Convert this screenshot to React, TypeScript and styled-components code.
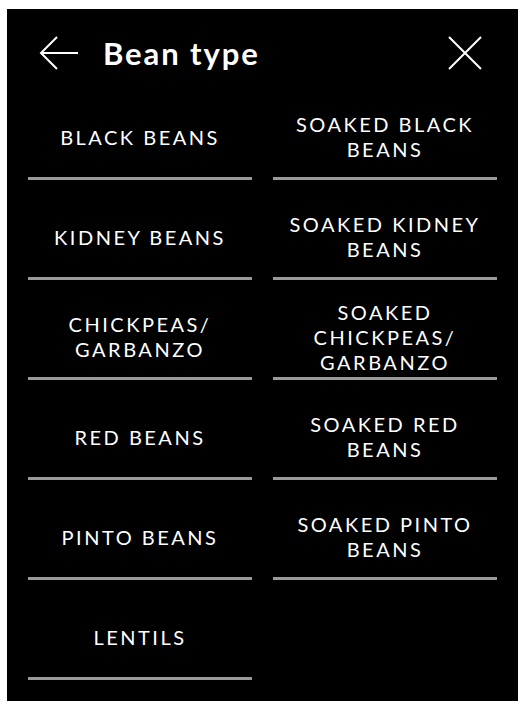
import React from "react";
import styled, { createGlobalStyle } from "styled-components";

const GlobalStyle = createGlobalStyle`
  body {
    margin: 0;
    background: #fff;
    font-family: "Lato", "Noto Sans", sans-serif;
  }
`;

const Page = styled.div`
  padding: 9px 8px 9px 7px;
`;

const Panel = styled.div`
  width: 511px;
  background: #000;
  color: #fff;
  padding-bottom: 21px;
  box-sizing: border-box;
`;

const Header = styled.div`
  height: 88px;
  display: flex;
  align-items: center;
  padding: 0 36px 0 32px;
`;

const IconButton = styled.button`
  background: none;
  border: none;
  padding: 0;
  display: flex;
  align-items: center;
  justify-content: center;
  color: #fff;
  cursor: pointer;
`;

const Title = styled.h1`
  margin: 0 0 0 24px;
  flex: 1;
  font-size: 31px;
  font-weight: 700;
  letter-spacing: 1.9px;
`;

const Grid = styled.div`
  display: grid;
  grid-template-columns: 224px 224px;
  column-gap: 21px;
  row-gap: 17px;
  padding: 0 21px;
`;

const Option = styled.button`
  height: 83px;
  box-sizing: border-box;
  background: none;
  border: none;
  border-bottom: 3px solid #9a9a9a;
  color: #fff;
  font-family: "Lato", "Noto Sans", sans-serif;
  font-size: 20px;
  font-weight: 400;
  letter-spacing: 2.5px;
  line-height: 25px;
  text-transform: uppercase;
  text-align: center;
  padding: 0 8px;
  display: flex;
  align-items: center;
  justify-content: center;
  cursor: pointer;
`;

const options = [
  "Black beans",
  "Soaked black beans",
  "Kidney beans",
  "Soaked kidney beans",
  "Chickpeas/ garbanzo",
  "Soaked chickpeas/ garbanzo",
  "Red beans",
  "Soaked red beans",
  "Pinto beans",
  "Soaked pinto beans",
  "Lentils",
];

const BackArrow = () => (
  <svg width="40" height="34" viewBox="-1 -1 40 34" fill="none" stroke="currentColor" strokeWidth="2">
    <path d="M17 0 L1 16 L17 32 M1 16 H38" />
  </svg>
);

const CloseIcon = () => (
  <svg width="34" height="34" viewBox="-1 -1 34 34" fill="none" stroke="currentColor" strokeWidth="2">
    <path d="M0 0 L32 32 M32 0 L0 32" />
  </svg>
);

const App: React.FC = () => {
  return (
    <Page>
      <GlobalStyle />
      <Panel>
        <Header>
          <IconButton aria-label="Back">
            <BackArrow />
          </IconButton>
          <Title>Bean type</Title>
          <IconButton aria-label="Close">
            <CloseIcon />
          </IconButton>
        </Header>
        <Grid>
          {options.map((option) => (
            <Option key={option}>{option}</Option>
          ))}
        </Grid>
      </Panel>
    </Page>
  );
};

export default App;
